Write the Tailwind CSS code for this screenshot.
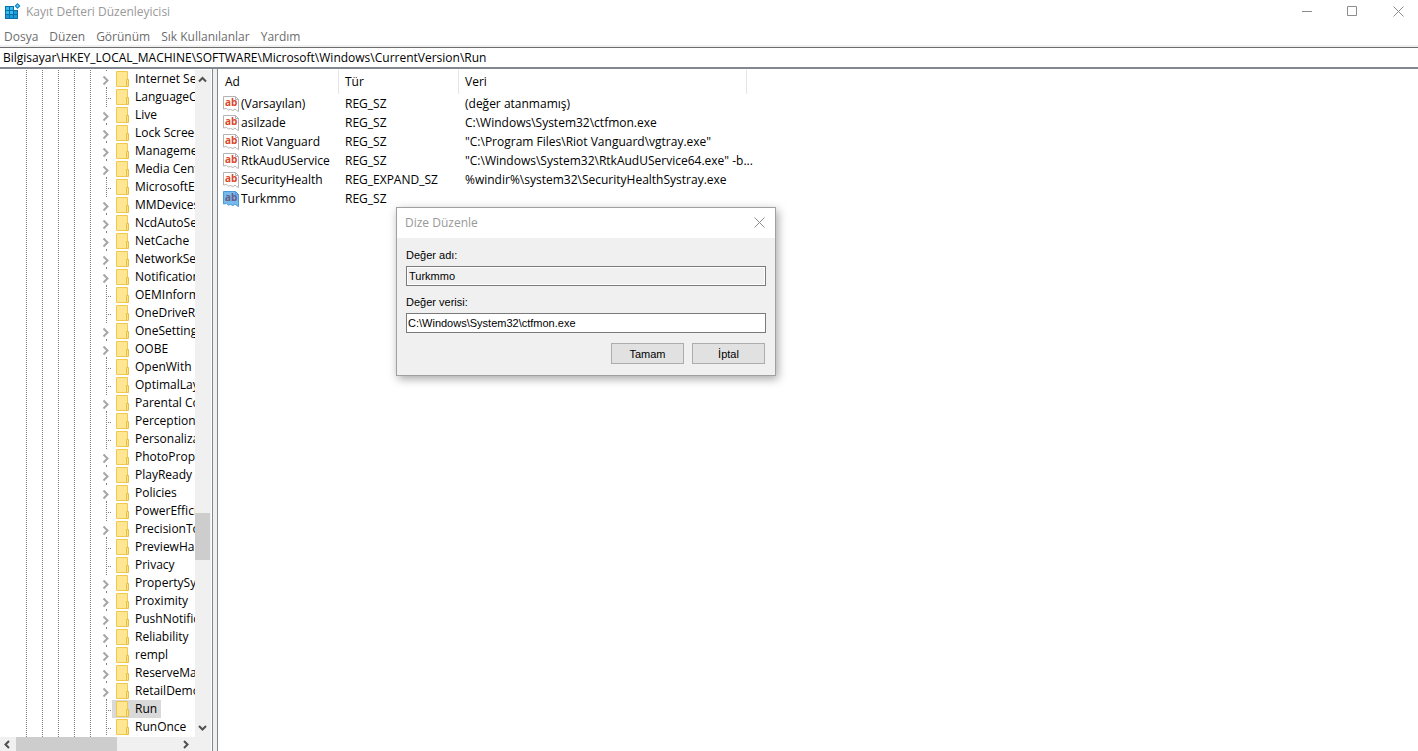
<!DOCTYPE html>
<html lang="tr">
<head>
    <title>Kayıt Defteri Düzenleyicisi</title>
    <meta charset="UTF-8">
    <meta name="viewport" content="width=device-width, initial-scale=1.0">
    <script src="https://cdn.jsdelivr.net/npm/@tailwindcss/browser@4"></script>
</head>
<body class="flex h-screen flex-col overflow-hidden bg-white font-['Open_Sans','Noto_Sans',sans-serif] text-[12px] leading-[18px] text-black">
    <!-- Title bar -->
    <header class="flex h-6 shrink-0 items-center justify-between text-[#999]">
        <div class="flex items-center gap-1 pl-1">
            <svg class="size-[18px]" viewBox="0 0 18 18" aria-hidden="true">
                <path d="M1 3h9v4h4v9H1z" fill="#0a6ea8" />
                <path d="M2 4h3v3H2zM6 4h3v3H6zM2 8h3v3H2zM6 8h3v3H6z" fill="#35bdf2" />
                <path d="M10 8h3v3h-3zM2 12h3v3H2zM6 12h3v3H6zM10 12h3v3h-3z" fill="#1c9ad6" />
                <path d="M13.500 0l3 3-3 3-3-3z" fill="#1385c4" />
                <path d="M13.500 1.700l1.300 1.300-1.300 1.300-1.300-1.300z" fill="#6fd3fa" />
            </svg>
            <h1>Kayıt Defteri Düzenleyicisi</h1>
        </div>
        <div class="flex h-full pb-px">
            <button class="flex w-[45px] items-center justify-center" aria-label="Simge durumuna küçült">
                <svg class="size-[11px]" viewBox="0 0 11 11" stroke="#8c8c8c" fill="none"><path d="M0 5.500h10" /></svg>
            </button>
            <button class="flex w-[45px] items-center justify-center" aria-label="Ekranı kapla">
                <svg class="size-[11px]" viewBox="0 0 11 11" stroke="#8c8c8c" fill="none"><path d="M.5.5h9v9h-9z" /></svg>
            </button>
            <button class="mr-[-3px] flex w-[46px] items-center justify-center" aria-label="Kapat">
                <svg class="size-[11px]" viewBox="0 0 11 11" stroke="#8c8c8c" fill="none"><path d="M.5.5l10 10M10.500.5l-10 10" /></svg>
            </button>
        </div>
    </header>

    <!-- Menu -->
    <nav class="flex h-[23px] shrink-0 gap-[11px] border-b-2 border-[#f0f0f0] pt-1 pl-1 text-[#6d6d6d]">
        <button>Dosya</button>
        <button>Düzen</button>
        <button>Görünüm</button>
        <button>Sık Kullanılanlar</button>
        <button>Yardım</button>
    </nav>

    <!-- Address bar -->
    <input class="h-[22px] w-full shrink-0 border-t border-b-2 border-t-[#6d6d6d] border-b-[#828790] pl-[3px] outline-none" aria-label="Adres" value="Bilgisayar\HKEY_LOCAL_MACHINE\SOFTWARE\Microsoft\Windows\CurrentVersion\Run">

    <div class="flex min-h-0 flex-1 bg-[#f0f0f0]">
        <!-- Key tree -->
        <aside class="flex w-[213px] shrink-0 flex-col border-r border-[#828790] bg-white pt-px pr-px">
            <div class="flex min-h-0 flex-1">
                <div class="flex min-w-0 flex-1 overflow-hidden">
                    <div class="flex shrink-0 gap-[15px] pl-[26px]">
                        <i class="w-px bg-[repeating-linear-gradient(to_bottom,#808080_0_1px,transparent_1px_2px)]"></i>
                        <i class="w-px bg-[repeating-linear-gradient(to_bottom,#808080_0_1px,transparent_1px_2px)]"></i>
                        <i class="w-px bg-[repeating-linear-gradient(to_bottom,#808080_0_1px,transparent_1px_2px)]"></i>
                        <i class="w-px bg-[repeating-linear-gradient(to_bottom,#808080_0_1px,transparent_1px_2px)]"></i>
                        <i class="w-px bg-[repeating-linear-gradient(to_bottom,#808080_0_1px,transparent_1px_2px)]"></i>
                    </div>
                    <ul id="tree"></ul>
                </div>
                <div class="flex w-4 shrink-0 flex-col bg-[#f0f0f0]">
                    <svg class="h-[18px] w-[15px]" viewBox="0 0 15 18" fill="none" stroke="#505050" stroke-width="2"><path d="M4 11.500L7.500 8l3.500 3.500" /></svg>
                    <div class="flex w-full flex-1 flex-col">
                        <div class="flex-[425]"></div>
                        <div class="mr-px flex-[47] bg-[#cdcdcd]"></div>
                        <div class="flex-[159]"></div>
                    </div>
                    <svg class="h-[18px] w-[15px]" viewBox="0 0 15 18" fill="none" stroke="#505050" stroke-width="2"><path d="M4 7l3.500 3.500L11 7" /></svg>
                </div>
            </div>
            <div class="flex h-[14px] shrink-0 bg-[#f0f0f0]">
                <svg class="h-[14px] w-4" viewBox="0 0 16 14" fill="none" stroke="#505050" stroke-width="2"><path d="M9 4L5.500 7.500 9 11" /></svg>
                <div class="w-[101px] bg-[#cdcdcd]"></div>
                <div class="flex-1"></div>
                <svg class="mr-[17px] h-[14px] w-4" viewBox="0 0 16 14" fill="none" stroke="#505050" stroke-width="2"><path d="M6 4l3.500 3.500L6 11" /></svg>
            </div>
        </aside>

        <!-- Values -->
        <main class="ml-1 min-w-0 flex-1 border-l border-[#828790] bg-white pt-px">
            <table class="w-[529px] table-fixed border-separate border-spacing-0 text-left">
                <colgroup>
                    <col class="w-[121px]">
                    <col class="w-[120px]">
                    <col class="w-[288px]">
                </colgroup>
                <thead>
                    <tr class="h-6">
                        <th class="border-r border-[#e5e5e5] p-0 pl-[7px] font-normal">Ad</th>
                        <th class="border-r border-[#e5e5e5] p-0 pl-[6px] font-normal">Tür</th>
                        <th class="border-r border-[#e5e5e5] p-0 pl-[6px] font-normal">Veri</th>
                    </tr>
                </thead>
                <tbody id="values"></tbody>
            </table>
        </main>
    </div>

    <!-- Edit string dialog -->
    <form role="dialog" aria-labelledby="dialog-title" class="absolute top-[207px] left-[396px] w-[380px] border border-[#a0a0a0] bg-[#f0f0f0] font-['Liberation_Sans',sans-serif] text-[11px] leading-[14px] shadow-[2px_3px_9px_rgba(0,0,0,0.35)]">
        <div class="flex h-[30px] items-center justify-between bg-white pr-[10px] pl-2">
            <h2 id="dialog-title" class="font-['Open_Sans','Noto_Sans',sans-serif] text-[12px] text-[#999]">Dize Düzenle</h2>
            <button type="button" class="pb-[2px]" aria-label="Kapat">
                <svg class="size-[11px]" viewBox="0 0 11 11" stroke="#8c8c8c" fill="none"><path d="M.5.5l10 10M10.500.5l-10 10" /></svg>
            </button>
        </div>
        <div class="flex flex-col px-[9px] pt-[10px] pb-[11px]">
            <label for="value-name">Değer adı:</label>
            <input id="value-name" class="mt-1 h-5 border border-[#7a7a7a] bg-[#f0f0f0] pl-[2px] inset-ring inset-ring-white outline-none" value="Turkmmo" readonly>
            <label for="value-data" class="mt-[9px]">Değer verisi:</label>
            <input id="value-data" class="mt-1 h-5 border border-[#7a7a7a] bg-white pl-px outline-none" value="C:\Windows\System32\ctfmon.exe">
            <div class="mt-[10px] flex justify-end gap-2 pr-px">
                <button type="button" class="h-[21px] w-[73px] border border-[#adadad] bg-[#e1e1e1]">Tamam</button>
                <button type="button" class="h-[21px] w-[73px] border border-[#adadad] bg-[#e1e1e1]">İptal</button>
            </div>
        </div>
    </form>

    <script>
        // [name, has subkeys]
        const keys = [
            ['Internet Settings', 1], ['LanguageComponentsInstaller', 0], ['Live', 1], ['Lock Screen', 1],
            ['Management Infrastructure', 1], ['Media Center', 1], ['MicrosoftEdge', 0], ['MMDevices', 1],
            ['NcdAutoSetup', 1], ['NetCache', 1], ['NetworkServiceTriggers', 1], ['Notifications', 1],
            ['OEMInformation', 0], ['OneDriveRamps', 0], ['OneSettings', 1], ['OOBE', 1], ['OpenWith', 0],
            ['OptimalLayout', 0], ['Parental Controls', 1], ['PerceptionSimulationExtensions', 0],
            ['Personalization', 0], ['PhotoPropertyHandler', 1], ['PlayReady', 1], ['Policies', 1],
            ['PowerEfficiencyDiagnostics', 0], ['PrecisionTouchPad', 1], ['PreviewHandlers', 0], ['Privacy', 0],
            ['PropertySystem', 1], ['Proximity', 1], ['PushNotifications', 1], ['Reliability', 1], ['rempl', 1],
            ['ReserveManager', 1], ['RetailDemo', 1], ['Run', 0], ['RunOnce', 0],
        ];
        const values = [
            ['(Varsayılan)', 'REG_SZ', '(değer atanmamış)'],
            ['asilzade', 'REG_SZ', 'C:\\Windows\\System32\\ctfmon.exe'],
            ['Riot Vanguard', 'REG_SZ', '"C:\\Program Files\\Riot Vanguard\\vgtray.exe"'],
            ['RtkAudUService', 'REG_SZ', '"C:\\Windows\\System32\\RtkAudUService64.exe" -b...'],
            ['SecurityHealth', 'REG_EXPAND_SZ', '%windir%\\system32\\SecurityHealthSystray.exe'],
            ['Turkmmo', 'REG_SZ', ''],
        ];

        const chevron = '<path d="M12.500 6.500l4 4-4 4" stroke="#a6a6a6" stroke-width="2" /><path d="M15.500 0v1M15.500 17v1" stroke="#808080" />';
        const branch = '<path d="M15.500 0v18M15 10.500h6" stroke="#808080" stroke-dasharray="1 1" />';

        document.getElementById('tree').innerHTML = keys.map(([name, open]) => `
            <li class="flex h-[18px] whitespace-nowrap">
                <svg class="h-[18px] w-[21px] shrink-0" viewBox="0 0 21 18" fill="none">${open ? chevron : branch}</svg>
                <span class="flex items-center gap-[5px] pr-1 pl-1 ${name === 'Run' ? 'bg-[#d9d9d9]' : ''}">
                    <svg class="h-4 w-[14px] shrink-0" viewBox="0 0 14 16">
                        <path d="M.5.5h11v15H.5z" fill="#ffe693" stroke="#efc94f" />
                        <path d="M10.500 8.500h2v7h-2z" fill="#ffe48a" stroke="#e8bf3f" />
                    </svg>
                    ${name}
                </span>
            </li>`).join('');

        document.getElementById('values').innerHTML = values.map(([name, type, data]) => {
            const on = name === 'Turkmmo';
            return `
            <tr class="h-[19px]">
                <td class="p-0 pl-[5px]">
                    <span class="flex items-center gap-[2px] whitespace-nowrap">
                        <svg class="size-4 shrink-0" viewBox="0 0 16 16">
                            <path d="M.5.5h12l3 3v12l-2-1-1.500-1.500-2 1.500-2.500-1-2 .5-2-1.500-3 .500z" fill="${on ? '#76b9ed' : '#fff'}" stroke="${on ? '#4a9bd8' : '#b4b4b4'}" />
                            <path d="M12.500.5v3h3" fill="none" stroke="${on ? '#4a9bd8' : '#b4b4b4'}" />
                            <text x="2" y="10" font-family="Open Sans" font-size="10" font-weight="700" fill="${on ? '#6a5c86' : '#d9482b'}">ab</text>
                        </svg>
                        ${name}
                    </span>
                </td>
                <td class="p-0 pl-[6px]">${type}</td>
                <td class="p-0 pl-[6px] whitespace-nowrap">${data}</td>
            </tr>`;
        }).join('');
    </script>
</body>
</html>
